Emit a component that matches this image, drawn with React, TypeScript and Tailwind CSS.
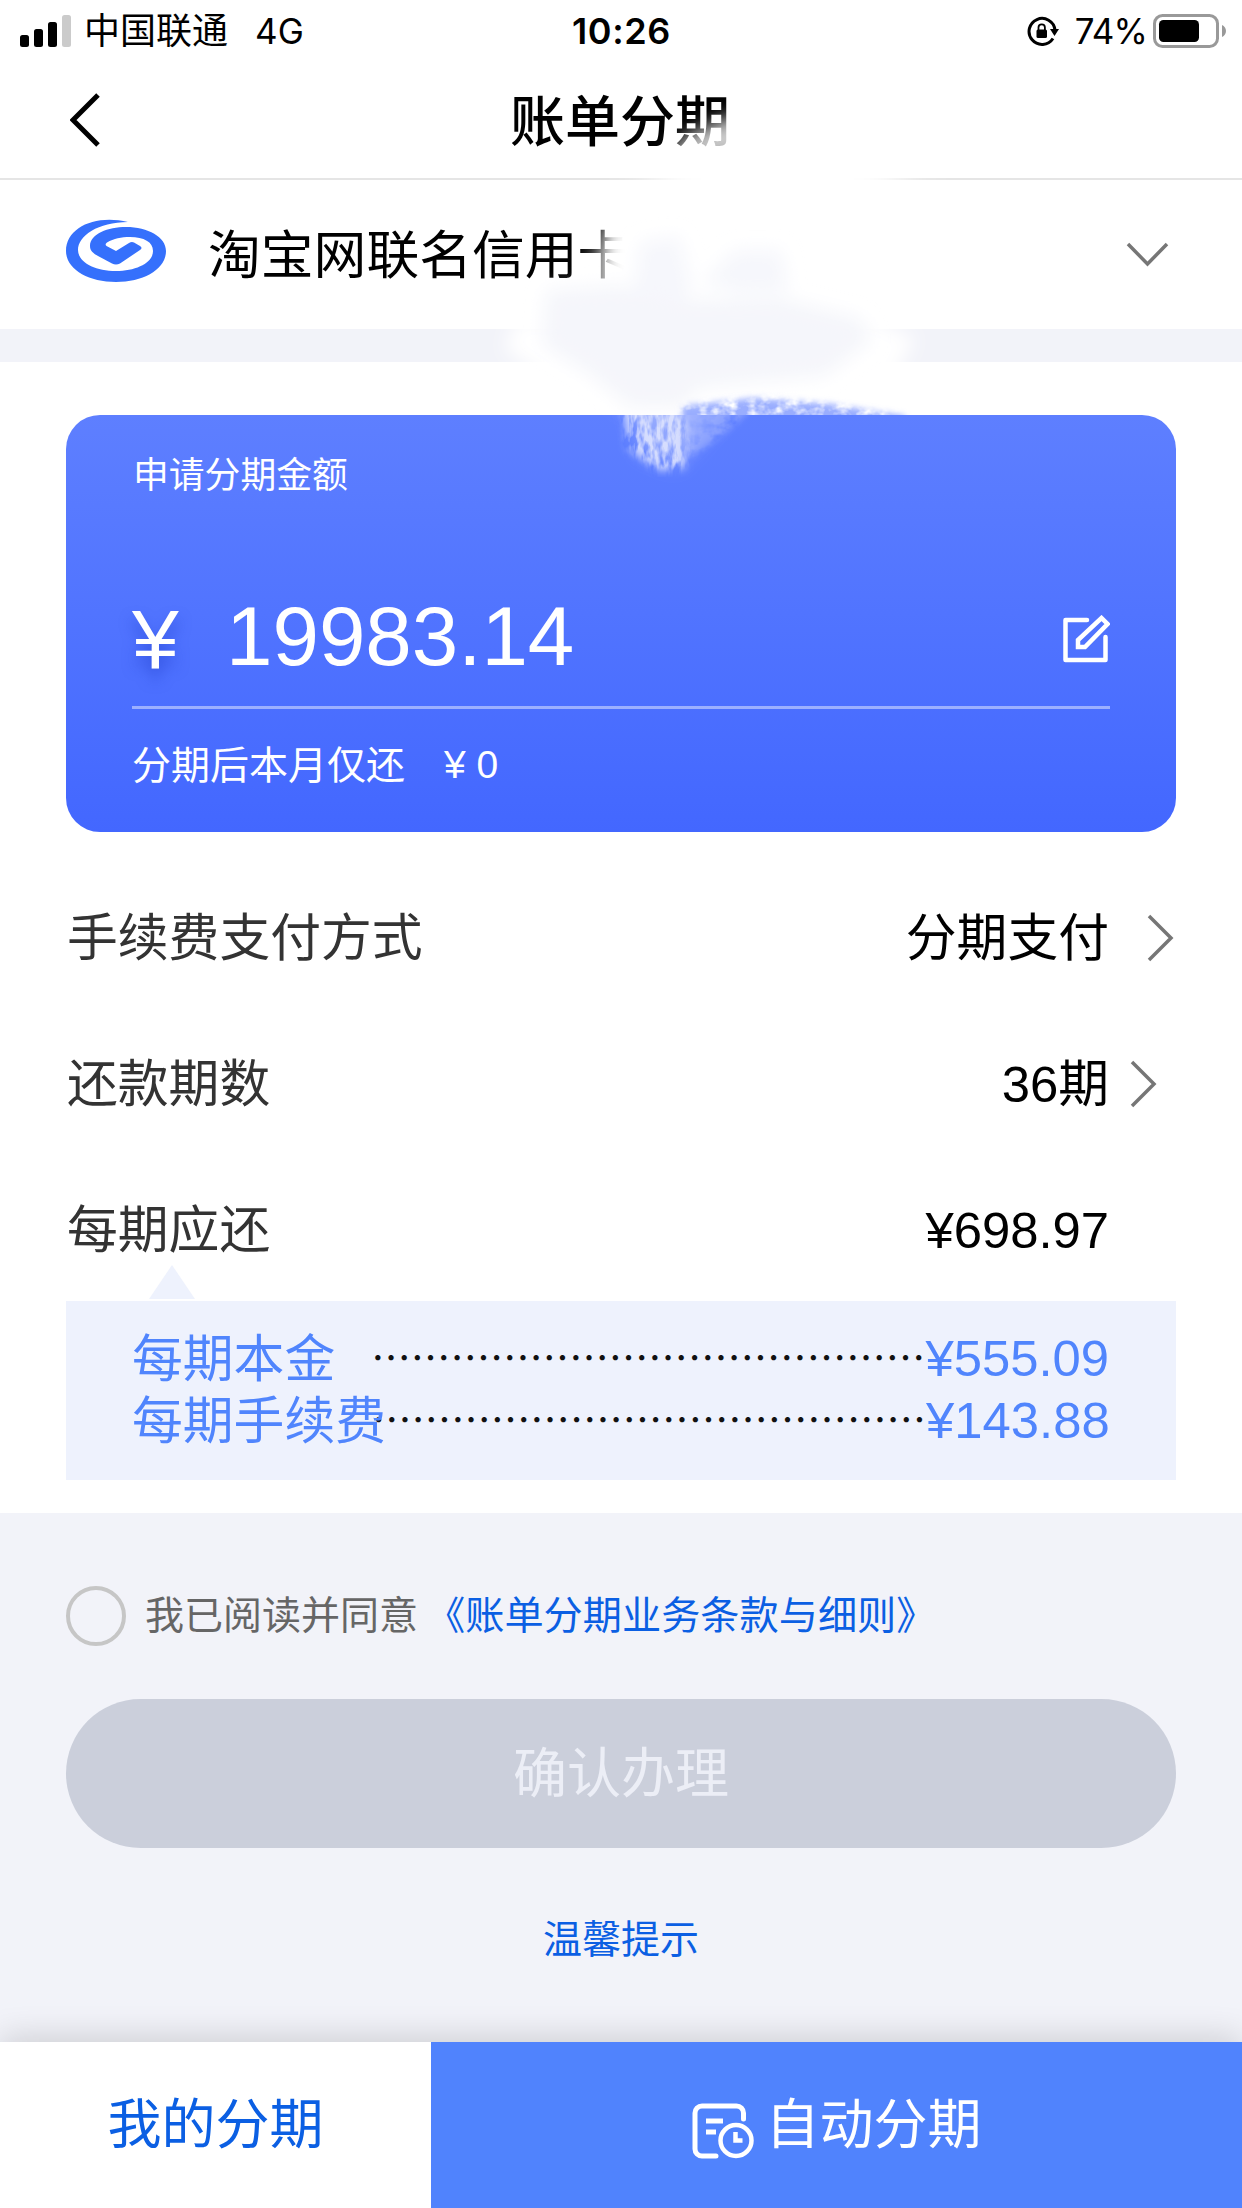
import { ReactNode } from 'react';

const details = [
  { label: '每期本金', value: '¥555.09' },
  { label: '每期手续费', value: '¥143.88' },
];

function StatusBar() {
  return (
    <div className="flex h-[60px] items-center pl-5 pr-[15px] pt-0.5 font-['Inter','Noto_Sans_CJK_SC',sans-serif] text-[35px] leading-[60px] text-black">
      <div className="flex flex-1 items-center">
        <svg width="51" height="32" viewBox="0 0 51 32">
          <rect x="0" y="20" width="9" height="12" rx="2.5" />
          <rect x="14" y="14" width="9" height="18" rx="2.5" />
          <rect x="28" y="7" width="9" height="25" rx="2.5" />
          <rect x="42" y="0" width="9" height="32" rx="2.5" fill="#cbcbcb" />
        </svg>
        <span className="ml-[13px] text-[36px]">中国联通</span>
        <span className="ml-[27px]">4G</span>
      </div>
      <span className="mr-1 text-[36px] font-semibold tracking-[0.6px]">10:26</span>
      <div className="flex flex-1 items-center justify-end">
        <svg width="32" height="32" viewBox="0 0 32 32" fill="none">
          <path d="M26 23.5A13 13 0 1 1 28 15" stroke="#000" strokeWidth="3" />
          <path d="M23 14h9l-4.5 7z" fill="#000" />
          <rect x="9.5" y="14.500" width="10.500" height="8.500" rx="1.500" fill="#000" />
          <path d="M11.500 15v-2.500a3.200 3.200 0 0 1 6.400 0V15" stroke="#000" strokeWidth="1.800" />
        </svg>
        <span className="ml-4 tracking-tight">74%</span>
        <svg className="ml-[6px]" width="74" height="34" viewBox="0 0 74 34" fill="none">
          <rect x="1.500" y="1.500" width="63" height="31" rx="8" stroke="#999" strokeWidth="3" />
          <rect x="6" y="6" width="40" height="22" rx="4.500" fill="#000" />
          <path d="M69 11v12c2.500-1 4-3.500 4-6s-1.500-5-4-6z" fill="#999" />
        </svg>
      </div>
    </div>
  );
}

function BankLogo() {
  return (
    <svg className="mb-[7px]" width="100" height="64" viewBox="0 0 100 64" fill="#3570fc">
      <path d="M62 3C30-5 0 8 0 32c0 18 22 31 50 31s50-13 50-31C100 18 82 8 60 8 42 8 24 15 24 27c0 5 3 7 8 10l14 7.500q4 2 8 0L74 31q3-2 0-4l-6-3.500q-2.500-1-5 .5L50 32l-9.500-5q-2-1.500.5-3.500C48 19.500 55 18 64 18c14 0 23 5 23 14 0 12-17 20-37 20-22 0-38-9-38-21C12 17 32 3 62 3z" />
    </svg>
  );
}

function ChevronRight() {
  return (
    <svg width="27" height="48" viewBox="0 0 27 48" fill="none">
      <path d="M2 2l22 22L2 46" stroke="#767676" strokeWidth="3.500" />
    </svg>
  );
}

function Row({ label, value, children }: { label: string; value: string; children?: ReactNode }) {
  return (
    <div className="flex h-[146px] items-center pl-[67px] text-[50.8px] leading-[72px]">
      <span className="flex-1 pt-0.5 text-[#333]">{label}</span>
      <span className="pt-px">{value}</span>
      <div className="flex w-[133px]">{children}</div>
    </div>
  );
}

// Brush marks that hide the card number
function Smudge() {
  return (
    <svg className="pointer-events-none absolute left-0 top-0" width="1242" height="500" viewBox="0 0 1242 500">
      <defs>
        <filter id="soft" x="-30%" y="-30%" width="160%" height="160%">
          <feGaussianBlur stdDeviation="9" />
        </filter>
        <filter id="wide" filterUnits="userSpaceOnUse" x="520" y="120" width="500" height="120">
          <feGaussianBlur stdDeviation="24 4" />
        </filter>
        <filter id="streaks" x="-10%" y="-10%" width="120%" height="120%">
          <feGaussianBlur in="SourceGraphic" stdDeviation="4" result="shape" />
          <feTurbulence type="fractalNoise" baseFrequency="0.16 0.06" numOctaves="3" seed="4" />
          <feColorMatrix values="0 0 0 0 1  0 0 0 0 1  0 0 0 0 1  0 3 0 0 -0.9" result="noise" />
          <feComposite in="shape" in2="noise" operator="in" />
        </filter>
        <filter id="grain" x="-10%" y="-60%" width="120%" height="220%">
          <feGaussianBlur in="SourceGraphic" stdDeviation="3" result="shape" />
          <feTurbulence type="fractalNoise" baseFrequency="0.08 0.1" numOctaves="3" seed="9" />
          <feColorMatrix values="0 0 0 0 1  0 0 0 0 1  0 0 0 0 1  0 2.500 0 0 -0.5" result="noise" />
          <feComposite in="shape" in2="noise" operator="in" />
        </filter>
        <clipPath id="aboveCard">
          <rect width="1242" height="415" />
        </clipPath>
        <clipPath id="onCard">
          <rect y="415" width="1242" height="85" />
        </clipPath>
      </defs>
      <g filter="url(#soft)" fill="#fff">
        <path d="M670 150L690 134L730 116L780 116L760 158L670 160z" fillOpacity=".8" />
        <path d="M604 222h60v70h-60z" />
        <path d="M588 245h30v40h-30z" fillOpacity=".35" />
        <path d="M515 320L870 318L915 338L890 385L560 385L505 350z" />
      </g>
      <rect filter="url(#wide)" x="655" y="165" width="245" height="28" fill="#fff" />
      <g filter="url(#soft)" fill="#f5f6fb">
        <path d="M546 290L620 285L660 300L780 298L860 318L872 340L825 376L700 388L680 408L630 408L590 375L542 345z" />
        <path d="M632 300L640 242L680 236L692 290L670 310z" fillOpacity=".85" />
        <path d="M702 282L735 250L782 250L788 292L735 292z" fillOpacity=".85" />
      </g>
      <g clipPath="url(#onCard)">
        <path filter="url(#soft)" fill="#b9c6fe" fillOpacity=".55" d="M628 400L735 400L700 440L675 466L642 452z" />
        <path filter="url(#streaks)" fill="#e3e8fe" fillOpacity=".85" d="M624 405L682 405L690 440L684 468L658 470L628 448z" />
        <path filter="url(#grain)" fill="#a9b9fe" fillOpacity=".5" d="M680 405L756 405L722 436L684 462z" />
      </g>
      <g clipPath="url(#aboveCard)">
        <path filter="url(#grain)" fill="#7f98fe" fillOpacity=".8" d="M682 406L755 398L830 404L905 416L905 424L682 424z" />
      </g>
    </svg>
  );
}

export default function App() {
  return (
    <div className="relative flex h-[2208px] w-[1242px] flex-col overflow-hidden bg-white font-['Liberation_Sans','Noto_Sans_CJK_SC',sans-serif] text-black">
      <StatusBar />

      <header className="flex h-[120px] items-center border-b-2 border-[#e5e5e5] pl-[70px]">
        <svg className="mt-0.5" width="30" height="54" viewBox="0 0 30 54" fill="none">
          <path d="M28 2L3 27l25 25" stroke="#000" strokeWidth="5" />
        </svg>
        <h1 className="mr-[102px] flex-1 pt-[5px] text-center text-[55px] font-medium leading-[80px]">账单分期</h1>
      </header>

      <div className="flex h-[149px] items-center pl-[66px] pr-[73px]">
        <BankLogo />
        <span className="ml-[42px] flex-1 pt-0.5 text-[52.8px] leading-[80px]">淘宝网联名信用卡</span>
        <svg width="43" height="25" viewBox="0 0 43 25" fill="none">
          <path d="M2 2l19.500 20L41 2" stroke="#767676" strokeWidth="3.500" />
        </svg>
      </div>
      <div className="h-[33px] bg-[#f2f3f9]" />

      <main className="flex h-[1151px] flex-col">
        <section className="mx-[66px] mt-[53px] h-[417px] rounded-[34px] bg-linear-to-b from-[#5e7fff] to-[#4367ff] px-[66px] text-white">
          <p className="pl-px pt-[34px] text-[35.8px] leading-[54px]">申请分期金额</p>
          <div className="mt-[73px] flex h-[133px] items-center border-b-[3px] border-white/45 pb-[10px]">
            <span className="w-[94px] pt-1.5 text-[84px] leading-[90px] [text-shadow:0_10px_14px_rgba(30,60,200,0.5)]">¥</span>
            <span className="flex-1 text-[83.5px] leading-[90px]">19983.14</span>
            <svg className="mt-1.5" width="47" height="48" viewBox="0 0 47 48" fill="none" stroke="#fff" strokeWidth="4.500">
              <path d="M24 5H2.500v40h40V22" strokeLinecap="round" strokeLinejoin="round" />
              <path d="M15 32v-7L38.500 3l6 6L22 32z" />
            </svg>
          </div>
          <p className="mt-[26px] flex text-[39px] leading-[60px]">
            <span className="pt-px">分期后本月仅还</span>
            <span className="ml-[39px]">¥ 0</span>
          </p>
        </section>

        <div className="mt-[33px]">
          <Row label="手续费支付方式" value="分期支付">
            <div className="ml-[38px]"><ChevronRight /></div>
          </Row>
          <Row label="还款期数" value="36期">
            <div className="ml-[21px]"><ChevronRight /></div>
          </Row>
          <Row label="每期应还" value="¥698.97" />
        </div>

        <div className="relative mx-[66px] -mt-[2px] h-[179px] bg-[#eef2fd] px-[66px] pt-[26px] text-[50.8px] leading-[62px] text-[#5085fd]">
          <svg className="absolute -top-9 left-[83px]" width="46" height="34" viewBox="0 0 46 34">
            <path d="M23 0l23 34H0z" fill="#eef2fd" />
          </svg>
          {details.map((item) => (
            <div key={item.label} className="flex h-[62px] items-center whitespace-nowrap">
              <span className="z-10 w-[240px] pt-[3px]">{item.label}</span>
              <span className="flex-1 pb-1 font-['Noto_Sans_CJK_SC',sans-serif] text-[39.6px] text-[#111]">……………………………………</span>
              <span className="mr-px w-[184px] pt-px text-right">{item.value}</span>
            </div>
          ))}
        </div>
      </main>

      <section className="flex h-[529px] flex-col bg-[#f2f3f9] px-[66px] pt-[73px] text-[39px] leading-[60px]">
        <div className="flex h-[60px] items-center">
          <span className="size-[60px] rounded-full border-4 border-[#c6c6c6]" />
          <span className="ml-[19px] text-[#666]">我已阅读并同意</span>
          <a className="ml-2 text-[39.2px] text-[#0b5fe3]">《账单分期业务条款与细则》</a>
        </div>
        <button className="mt-[53px] h-[149px] rounded-full bg-[#cbcfdb] text-[54px] text-[#eceef6]">确认办理</button>
        <a className="mt-[62px] text-center text-[#0b5fe3]">温馨提示</a>
      </section>

      <footer className="flex h-[166px] text-[54px] leading-[80px] shadow-[0_-4px_32px_rgba(0,0,0,0.16)]">
        <button className="w-[431px] bg-white text-[#0b5fe3]">我的分期</button>
        <button className="flex flex-1 items-center justify-center bg-[#5083fd] text-white">
          <svg className="mt-3 mr-3" width="62" height="56" viewBox="0 0 62 56" fill="none" stroke="#fff" strokeWidth="5" strokeLinecap="round">
            <path d="M51.500 16V10a7 7 0 0 0-7-7H10a7 7 0 0 0-7 7v36a7 7 0 0 0 7 7h14" />
            <path d="M14 18h17M14 29h10" strokeLinecap="butt" />
            <circle cx="44" cy="37.500" r="15.500" strokeWidth="4.500" />
            <path d="M43.500 29v8.500h7" strokeLinecap="butt" strokeWidth="4.500" />
          </svg>
          <span>自动分期</span>
        </button>
      </footer>

      <Smudge />
    </div>
  );
}
